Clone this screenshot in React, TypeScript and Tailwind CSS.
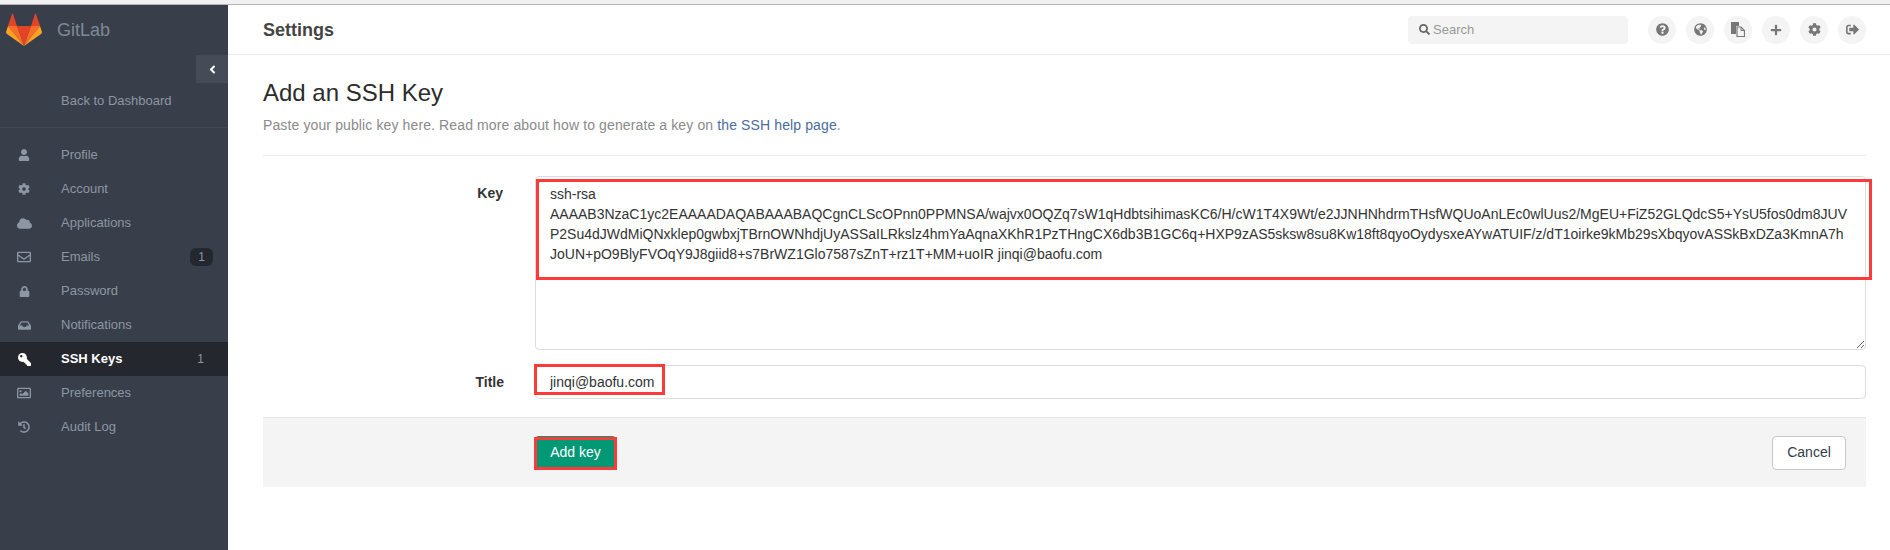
import {
  FaAngleLeft,
  FaCloud,
  FaCog,
  FaGlobeAmericas,
  FaHistory,
  FaInbox,
  FaKey,
  FaLock,
  FaPlus,
  FaQuestionCircle,
  FaRegEnvelope,
  FaRegImage,
  FaSearch,
  FaSignOutAlt,
  FaUser,
} from "react-icons/fa";

const keyText = `ssh-rsa
AAAAB3NzaC1yc2EAAAADAQABAAABAQCgnCLScOPnn0PPMNSA/wajvx0OQZq7sW1qHdbtsihimasKC6/H/cW1T4X9Wt/e2JJNHNhdrmTHsfWQUoAnLEc0wlUus2/MgEU+FiZ52GLQdcS5+YsU5fos0dm8JUV
P2Su4dJWdMiQNxklep0gwbxjTBrnOWNhdjUyASSaILRkslz4hmYaAqnaXKhR1PzTHngCX6db3B1GC6q+HXP9zAS5sksw8su8Kw18ft8qyoOydysxeAYwATUIF/z/dT1oirke9kMb29sXbqyovASSkBxDZa3KmnA7h
JoUN+pO9BlyFVOqY9J8giid8+s7BrWZ1Glo7587sZnT+rz1T+MM+uoIR jinqi@baofu.com`;

const navItems = [
  { label: "Profile", icon: <FaUser className="w-[12px] h-[12px]" /> },
  { label: "Account", icon: <FaCog className="w-[12px] h-[12px]" /> },
  { label: "Applications", icon: <FaCloud className="w-[15px] h-[15px]" /> },
  { label: "Emails", icon: <FaRegEnvelope className="w-[14px] h-[14px]" />, badge: "1" },
  { label: "Password", icon: <FaLock className="w-[11px] h-[11px]" /> },
  { label: "Notifications", icon: <FaInbox className="w-[13px] h-[13px]" /> },
  { label: "SSH Keys", icon: <FaKey className="w-[13px] h-[13px] -scale-x-100" />, count: "1", active: true },
  { label: "Preferences", icon: <FaRegImage className="w-[14px] h-[14px]" /> },
  { label: "Audit Log", icon: <FaHistory className="w-[12px] h-[12px]" /> },
];

// fa-files-o: solid back sheet, outlined front sheet
const FilesIcon = () => (
  <svg viewBox="0 0 14 15" className="w-[14px] h-[15px]">
    <path d="M0 0 H8 V4 H5 V12 H0 Z" fill="currentColor" />
    <path d="M6 5 H10 L13.5 8.5 V14.5 H6 Z" fill="none" stroke="currentColor" strokeWidth="1.2" />
    <path d="M10 5 V8.5 H13.5" fill="none" stroke="currentColor" strokeWidth="1" />
  </svg>
);

const headerIcons = [
  <FaQuestionCircle className="w-[13px] h-[13px]" />,
  <FaGlobeAmericas className="w-[13px] h-[13px]" />,
  <FilesIcon />,
  <FaPlus className="w-[12px] h-[12px]" />,
  <FaCog className="w-[13px] h-[13px]" />,
  <FaSignOutAlt className="w-[13px] h-[13px]" />,
];

const GitLabLogo = () => (
  <svg viewBox="0 0 36 34" className="w-[36px] h-[34px]">
    <path d="M18 33 L11 13 H25 Z" fill="#e24329" />
    <path d="M18 33 L11 13 H2 Z" fill="#fc6d26" />
    <path d="M2 13 L0 19 Q0 20 1 21 L18 33 Z" fill="#fca326" />
    <path d="M2 13 H11 L7 1 Q6.5 0 6 1 Z" fill="#e24329" />
    <path d="M18 33 L25 13 H34 Z" fill="#fc6d26" />
    <path d="M34 13 L36 19 Q36 20 35 21 L18 33 Z" fill="#fca326" />
    <path d="M34 13 H25 L29 1 Q29.5 0 30 1 Z" fill="#e24329" />
  </svg>
);

const App = () => {
  return (
    <div
      className="h-[550px] bg-white overflow-hidden flex flex-col text-[#333c48]"
      style={{ fontFamily: "'Liberation Sans', Arial, sans-serif" }}
    >
      {/* Browser edge */}
      <div className="h-[5px] shrink-0 bg-[#f1f1f1] border-b border-[#b4b4b4]" />

      <div className="flex flex-1 min-h-0">
        {/* Sidebar */}
        <aside className="w-[228px] shrink-0 bg-[#383f4a] text-[#8d96a3] text-[13px] relative">
          <div className="h-[50px] flex items-center pl-[6px] gap-[15px]">
            <GitLabLogo />
            <span className="text-[18px] text-[#7f8896]">GitLab</span>
          </div>
          <button className="absolute right-0 top-[50px] w-[32px] h-[28px] bg-[#454c58] flex items-center justify-center text-white">
            <FaAngleLeft className="w-[13px] h-[13px]" />
          </button>
          <div className="h-[73px] pl-[61px] pt-[38px] border-b border-[#444b57] leading-[16px]">
            Back to Dashboard
          </div>
          <nav className="pt-[10px]">
            {navItems.map((item) => (
              <div
                key={item.label}
                className={`h-[34px] flex items-center ${
                  item.active ? "bg-[#24272e] text-white font-bold" : ""
                }`}
              >
                <span className="w-[61px] shrink-0">
                  <span className="w-[48px] flex items-center justify-center">{item.icon}</span>
                </span>
                <span className="flex-1">{item.label}</span>
                {item.badge && (
                  <span className="mr-[15px] w-[23px] h-[18px] rounded-[6px] bg-[#24272e] flex items-center justify-center text-[12px]">
                    {item.badge}
                  </span>
                )}
                {item.count && (
                  <span className="mr-[24px] text-[12px] font-normal text-[#8d96a3]">{item.count}</span>
                )}
              </div>
            ))}
          </nav>
        </aside>

        {/* Main */}
        <main className="flex-1 min-w-0">
          <header className="h-[50px] border-b border-[#ececec] flex items-center pl-[35px] pr-[24px]">
            <h2 className="text-[18px] font-bold text-[#444] pt-[2px]">Settings</h2>
            <div className="ml-auto w-[220px] h-[28px] bg-[#f4f4f4] rounded-[4px] flex items-center px-[11px] gap-[3px] text-[13px] text-[#999]">
              <FaSearch className="w-[11px] h-[11px] text-[#666]" />
              <span>Search</span>
            </div>
            <div className="flex gap-[10px] ml-[20px]">
              {headerIcons.map((icon, i) => (
                <div
                  key={i}
                  className="w-[28px] h-[28px] rounded-full bg-[#f4f4f4] text-[#777] flex items-center justify-center"
                >
                  {icon}
                </div>
              ))}
            </div>
          </header>

          <div className="pl-[35px] pr-[24px]">
            <h3 className="text-[24px] leading-[30px] pt-[23px] text-[#2c2c2c]">Add an SSH Key</h3>
            <p className="text-[14px] leading-[20px] mt-[7px] text-[#8a8a8a] tracking-[0.12px]">
              Paste your public key here. Read more about how to generate a key on{" "}
              <a className="text-[#4a6d9c]">the SSH help page</a>.
            </p>
            <div className="border-t border-[#ececec] mt-[20px]" />

            {/* Form */}
            <div className="flex mt-[20px]">
              <label className="w-[272px] shrink-0 pr-[32px] text-right text-[14px] font-bold pt-[7px] leading-[20px] text-[#333]">
                Key
              </label>
              <div className="flex-1 relative">
                <textarea
                  readOnly
                  wrap="off"
                  value={keyText}
                  className="block w-full h-[174px] resize-y overflow-hidden border border-[#dcdcdc] rounded-[4px] pl-[14px] pr-[6px] pt-[7px] text-[14px] leading-[20px] text-[#333] outline-none"
                />
                <div className="absolute left-[1px] right-[-6px] top-[3px] h-[101px] border-[3px] border-[#fb3a3a] pointer-events-none" />
              </div>
            </div>

            <div className="flex mt-[15px]">
              <label className="w-[272px] shrink-0 pr-[31px] text-right text-[14px] font-bold pt-[7px] leading-[20px] text-[#333]">
                Title
              </label>
              <div className="flex-1 relative">
                <input
                  readOnly
                  value="jinqi@baofu.com"
                  className="block w-full h-[34px] border border-[#dcdcdc] rounded-[4px] pl-[14px] text-[14px] text-[#333] outline-none"
                />
                <div className="absolute left-[-1px] top-[-1px] w-[131px] h-[31px] border-[3px] border-[#fb3a3a] pointer-events-none" />
              </div>
            </div>

            <div className="mt-[18px] h-[70px] bg-[#f4f4f4] border-t border-[#e4e4e4] flex items-center justify-between pl-[272px] pr-[20px]">
              <div className="relative">
                <button className="block w-[81px] h-[34px] bg-[#019875] rounded-[4px] text-white text-[14px]">
                  Add key
                </button>
                <div className="absolute left-[-1px] top-[1px] w-[83px] h-[33px] border-[3px] border-[#fb3a3a] pointer-events-none" />
              </div>
              <button className="w-[74px] h-[34px] bg-white border border-[#c8c8c8] rounded-[4px] text-[14px] text-[#333c48]">
                Cancel
              </button>
            </div>
          </div>
        </main>
      </div>
    </div>
  );
};

export default App;
